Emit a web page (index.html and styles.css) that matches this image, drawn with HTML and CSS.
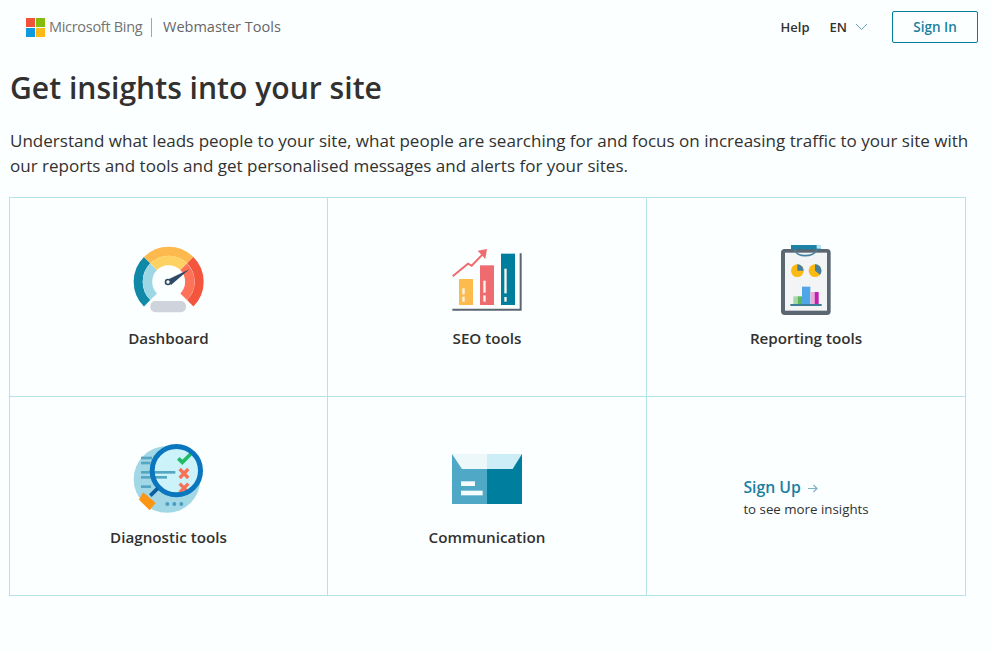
FILE: index.html
```html
<!DOCTYPE html>
<html lang="en">
<head>
<meta charset="utf-8">
<title>Bing Webmaster Tools</title>
<link rel="stylesheet" href="styles.css">
</head>
<body>
<header class="topbar">
  <div class="brand">
    <svg class="ms-logo" width="19" height="19" viewBox="0 0 19 19"><rect width="9" height="9" fill="#f25239"/><rect x="10" width="9" height="9" fill="#85bb0c"/><rect y="10" width="9" height="9" fill="#0f9ae0"/><rect x="10" y="10" width="9" height="9" fill="#fdb917"/></svg>
    <span class="brand-ms">Microsoft Bing</span>
    <span class="brand-sep"></span>
    <span class="brand-wt">Webmaster Tools</span>
  </div>
  <nav class="nav">
    <span class="nav-help">Help</span>
    <span class="nav-lang">EN
      <svg width="13" height="8" viewBox="0 0 13 8"><path d="M1 1l5.500 5.500L12 1" fill="none" stroke="#6fa6c0" stroke-width="1"/></svg>
    </span>
    <span class="signin">Sign In</span>
  </nav>
</header>
<main class="main">
  <h1 class="title">Get insights into your site</h1>
  <p class="lead">Understand what leads people to your site, what people are searching for and focus on increasing traffic to your site with our reports and tools and get personalised messages and alerts for your sites.</p>
  <section class="grid">
    <div class="cell">
      <svg class="icon" width="100" height="90" viewBox="-4 0 300 270">
        <g fill="none" stroke-width="27">
          <path d="M80.300 204.700A91.500 91.500 0 0 1 80.300 75.300" stroke="#1089a8"/>
          <path d="M80.300 75.300A91.500 91.500 0 0 1 209.700 75.300" stroke="#fdb94e"/>
          <path d="M209.700 75.300A91.500 91.500 0 0 1 209.700 204.700" stroke="#f4553d"/>
        </g>
        <g fill="none" stroke-width="28">
          <path d="M100 185A64 64 0 0 1 100 95" stroke="#9dd6e4"/>
          <path d="M100 95A64 64 0 0 1 190 95" stroke="#fdd263"/>
          <path d="M190 95A64 64 0 0 1 190 185" stroke="#fd7258"/>
        </g>
        <rect x="90" y="198" width="107" height="34" rx="15" fill="#cfd4dc"/>
        <path d="M146 132L207 103L152 150Z" fill="#2f4a66"/>
        <circle cx="143" cy="141" r="7.500" fill="#fff" stroke="#2f4a66" stroke-width="5"/>
      </svg>
      <span class="label">Dashboard</span>
    </div>
    <div class="cell">
      <svg class="icon" width="100" height="90" viewBox="-9 0 300 270">
        <path d="M37 221H239V55H245V227H37Z" fill="#5c6672"/>
        <rect x="57" y="132" width="42" height="78" fill="#fdbb4d"/>
        <rect x="120" y="91" width="42" height="119" fill="#ee6c70"/>
        <rect x="183" y="56" width="42" height="154" fill="#007e9e"/>
        <g fill="#fdf6ea">
          <rect x="67" y="160" width="7" height="18"/><rect x="67" y="185" width="7" height="15"/>
          <rect x="130" y="137" width="7" height="36"/><rect x="130" y="181" width="7" height="19"/>
          <rect x="193" y="101" width="7" height="74"/><rect x="193" y="186" width="7" height="14"/>
        </g>
        <path d="M38 124L84 86L95 92L128 58" fill="none" stroke="#ee6c70" stroke-width="6"/>
        <path d="M113 47L141 42L136 72Z" fill="#ee6c70"/>
      </svg>
      <span class="label">SEO tools</span>
    </div>
    <div class="cell">
      <svg class="icon" width="100" height="90" viewBox="-12 0 300 270">
        <rect x="63" y="42" width="149" height="198" rx="11" fill="#5b6672"/>
        <rect x="75" y="53" width="126" height="174" fill="#f3f4f6"/>
        <rect x="93" y="30" width="90" height="13" fill="#1b84a6"/>
        <rect x="170" y="30" width="13" height="11" fill="#b9e4f0"/>
        <path d="M105 44C108 68 162 68 170 44" fill="none" stroke="#47809f" stroke-width="5"/>
        <circle cx="112" cy="107" r="19" fill="#fdb913"/>
        <path d="M112 107V88A19 19 0 0 1 131 107Z" fill="#47809f"/>
        <circle cx="165" cy="107" r="19" fill="#fdb913"/>
        <path d="M165 107V88A19 19 0 0 1 180 119Z" fill="#47809f"/>
        <rect x="100" y="184" width="13" height="24" fill="#a8d6a4"/>
        <rect x="113" y="184" width="13" height="24" fill="#5cb85f"/>
        <rect x="126" y="155" width="25" height="53" fill="#4fa5e8"/>
        <rect x="152" y="171" width="12" height="37" fill="#eca9d9"/>
        <rect x="164" y="171" width="12" height="37" fill="#c11fb2"/>
        <rect x="91" y="207" width="94" height="6" fill="#3d7d99"/>
      </svg>
      <span class="label">Reporting tools</span>
    </div>
    <div class="cell">
      <svg class="icon" width="100" height="90" viewBox="-4 -3 300 270">
        <circle cx="140" cy="133" r="100" fill="#a2d7e6"/>
        <circle cx="168" cy="107" r="70" fill="#cdf3fa"/>
        <g fill="#55a6c2">
          <rect x="62" y="65" width="33" height="8"/><rect x="62" y="80" width="28" height="8"/>
          <rect x="62" y="108" width="103" height="8"/><rect x="62" y="123" width="78" height="8"/>
          <rect x="62" y="151" width="30" height="8"/>
        </g>
        <path d="M174 70L186 82L214 54" fill="none" stroke="#1ebd66" stroke-width="11"/>
        <path d="M178 102L204 129M204 102L178 129" fill="none" stroke="#fa7158" stroke-width="10"/>
        <path d="M178 146L204 172M204 146L178 172" fill="none" stroke="#fa7158" stroke-width="10"/>
        <circle cx="168" cy="107" r="72.500" fill="none" stroke="#0a76bd" stroke-width="15"/>
        <path d="M112 160L90 182" stroke="#0a5fa0" stroke-width="11"/>
        <path d="M68 172L106 203L88 226L56 194Z" fill="#fc9513"/>
        <g fill="#4a9fc0"><circle cx="141" cy="207" r="6"/><circle cx="162" cy="207" r="6"/><circle cx="183" cy="207" r="6"/></g>
      </svg>
      <span class="label">Diagnostic tools</span>
    </div>
    <div class="cell">
      <svg class="icon" width="100" height="90" viewBox="-9 -3 300 270">
        <rect x="36" y="57" width="105" height="150" fill="#4fa9c6"/>
        <rect x="141" y="57" width="105" height="150" fill="#007e9e"/>
        <path d="M36 57H141V102H66Z" fill="#ecf8fa"/>
        <path d="M141 57H246L218 102H141Z" fill="#cdeef6"/>
        <rect x="63" y="139" width="42" height="14" fill="#f4fcfd"/>
        <rect x="63" y="167" width="65" height="14" fill="#f4fcfd"/>
      </svg>
      <span class="label">Communication</span>
    </div>
    <div class="cell cell-signup">
      <div class="signup">
        <span class="signup-link">Sign Up <svg width="10" height="9" viewBox="0 0 10 9"><path d="M0 4.500H9M5.500 1L9 4.500L5.500 8" fill="none" stroke="#7fb0c6" stroke-width="1.200"/></svg></span>
        <span class="signup-sub">to see more insights</span>
      </div>
    </div>
  </section>
</main>
</body>
</html>
```
FILE: styles.css
```css
* { box-sizing: border-box; }
html, body { margin: 0; height: 100%; }
body {
  background: #fbffff;
  color: #323130;
  font-family: "Open Sans", "Noto Sans", "Liberation Sans", sans-serif;
  overflow: hidden;
}
.topbar {
  display: flex;
  justify-content: space-between;
  align-items: center;
  height: 54px;
  padding: 0 14px 0 26px;
}
.brand { display: flex; align-items: center; height: 19px; }
.brand-ms { margin-left: 4px; width: 93px; font-size: 14.500px; letter-spacing: -0.3px; color: #737373; white-space: nowrap; line-height: 17px; margin-top: -1px; }
.brand-sep { width: 1px; height: 19px; margin: 0 11px 0 9px; background: #a6a6a6; }
.brand-wt { font-size: 14.500px; color: #666; white-space: nowrap; line-height: 17px; margin-top: -1px; }
.nav { display: flex; align-items: center; font-size: 13px; font-weight: 600; }
.nav-help { margin-right: 20px; }
.nav-lang { display: flex; align-items: center; gap: 8px; margin-right: 24px; }
.signin {
  display: flex;
  align-items: center;
  justify-content: center;
  width: 86px;
  height: 32px;
  border: 1px solid #007e9e;
  border-radius: 2px;
  color: #1a7f9e;
  font-size: 13.500px;
}
.main { padding: 0 26px 0 9px; }
.title { margin: 14px 0 0 1px; font-size: 30.100px; line-height: 40px; font-weight: 600; color: #323130; }
.lead { margin: 20px 0 19px 1px; font-size: 17.040px; line-height: 25px; color: #323130; width: 965px; }
.grid {
  display: grid;
  grid-template-columns: 318px 319px 319px;
  grid-template-rows: 199px 199px;
  width: 957px;
  border-top: 1px solid #b5e3ea;
  border-left: 1px solid #b5e3ea;
}
.cell {
  display: flex;
  flex-direction: column;
  align-items: center;
  padding-top: 37px;
  border-right: 1px solid #b5e3ea;
  border-bottom: 1px solid #b5e3ea;
}
.icon { display: block; }
.label { margin-top: 2px; font-size: 15.200px; line-height: 22px; font-weight: 600; color: #323130; }
.cell-signup { justify-content: center; padding-top: 0; }
.signup { display: flex; flex-direction: column; gap: 2px; padding-top: 2px; }
.signup-link { font-size: 15.800px; line-height: 22px; font-weight: 600; color: #1a7f9e; }
.signup-link svg { margin-left: 3px; }
.signup-sub { font-size: 13.300px; line-height: 18px; color: #323130; }
```
